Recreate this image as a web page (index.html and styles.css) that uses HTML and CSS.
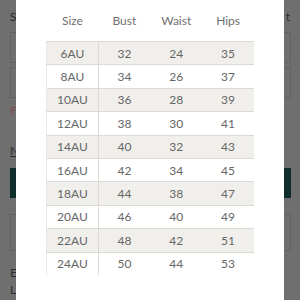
FILE: index.html
```html
<!DOCTYPE html>
<html>
<head>
<meta charset="utf-8">
<link rel="stylesheet" href="styles.css">
</head>
<body>
<div class="page">
  <div class="label-row"><span>S</span><span>t</span></div>
  <div class="select"></div>
  <div class="select second"></div>
  <div class="error">F</div>
  <div class="link">N</div>
  <div class="button"></div>
  <div class="select third"></div>
  <div class="note">E</div>
  <div class="note">L</div>
</div>
<div class="modal">
  <table class="chart">
    <thead>
      <tr><th>Size</th><th>Bust</th><th>Waist</th><th>Hips</th></tr>
    </thead>
    <tbody>
      <tr class="shade"><td>6AU</td><td>32</td><td>24</td><td>35</td></tr>
      <tr><td>8AU</td><td>34</td><td>26</td><td>37</td></tr>
      <tr class="shade"><td>10AU</td><td>36</td><td>28</td><td>39</td></tr>
      <tr><td>12AU</td><td>38</td><td>30</td><td>41</td></tr>
      <tr class="shade"><td>14AU</td><td>40</td><td>32</td><td>43</td></tr>
      <tr><td>16AU</td><td>42</td><td>34</td><td>45</td></tr>
      <tr class="shade"><td>18AU</td><td>44</td><td>38</td><td>47</td></tr>
      <tr><td>20AU</td><td>46</td><td>40</td><td>49</td></tr>
      <tr class="shade"><td>22AU</td><td>48</td><td>42</td><td>51</td></tr>
      <tr><td>24AU</td><td>50</td><td>44</td><td>53</td></tr>
    </tbody>
  </table>
</div>
</body>
</html>
```
FILE: styles.css
```css
html, body {
  margin: 0;
  padding: 0;
  height: 300px;
  overflow: hidden;
}
body {
  background: #6f6f6f;
  font-family: Lato, "Liberation Sans", sans-serif;
  position: relative;
}
.page {
  width: 281px;
  margin-left: 10px;
  padding-top: 11px;
  color: #2c2c2c;
  font-size: 12px;
  white-space: nowrap;
  overflow: hidden;
}
.label-row {
  display: flex;
  justify-content: space-between;
  height: 11px;
  line-height: 11px;
  font-size: 12px;
  padding-right: 1px;
}
.select {
  margin-top: 10px;
  height: 29px;
  border: 1px solid #626262;
}
.select.second {
  margin-top: 4px;
}
.error {
  margin-top: 8px;
  color: #7e4c4c;
  line-height: 10px;
}
.link {
  margin-top: 30px;
  line-height: 10px;
  text-decoration: underline;
}
.button {
  margin-top: 12px;
  height: 30px;
  background: #0f2e2b;
}
.select.third {
  margin-top: 16px;
  height: 35px;
}
.note {
  margin-top: 17px;
  line-height: 10px;
}
.note + .note {
  margin-top: 7px;
}
.modal {
  position: absolute;
  top: 0;
  left: 16px;
  width: 268px;
  height: 300px;
  background: #fff;
  padding: 0 30px;
  box-sizing: border-box;
}
.chart {
  width: 208px;
  border-collapse: collapse;
  table-layout: fixed;
  color: #666;
  font-size: 12px;
}
.chart th {
  height: 40px;
  padding: 0 0 1px;
  font-weight: normal;
  color: #707070;
  text-align: center;
}
.chart td {
  height: 23.4px;
  padding: 0;
  text-align: center;
  box-sizing: border-box;
}
.chart td:first-child {
  border-right: 1px solid #dcd8d3;
  border-left: 1px solid #ebe8e4;
}
.chart tr.shade td {
  background: #f1efec;
  border-top: 1px solid #dcd8d3;
  border-bottom: 1px solid #dcd8d3;
}
```
